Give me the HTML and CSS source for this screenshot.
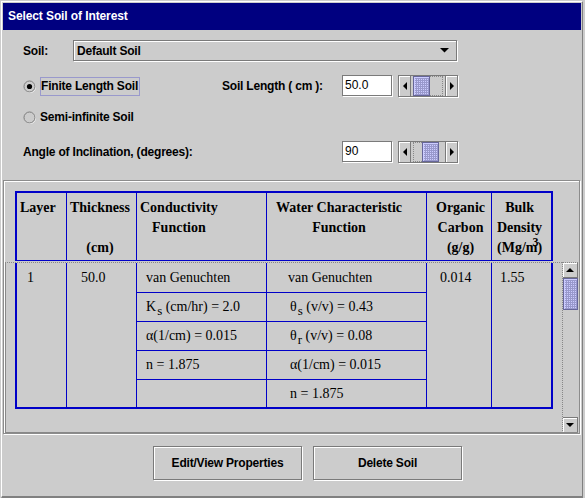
FILE: index.html
```html
<!DOCTYPE html>
<html>
<head>
<meta charset="utf-8">
<link rel="stylesheet" href="styles.css">
</head>
<body>
<div class="frame">
  <div class="title">Select Soil of Interest</div>
  <div class="controls">
    <div class="soil-row">
      <span class="lbl soil-lbl">Soil:</span>
      <div class="combo">
        <span class="combo-text">Default Soil</span>
        <svg class="combo-arrow" width="9" height="5" viewBox="0 0 9 5"><polygon points="0,0 9,0 4.5,4.5" fill="#000"/></svg>
      </div>
    </div>
    <div class="ctl-grid">
      <div class="radio-cell r1 c1">
        <svg class="radio" width="13" height="13" viewBox="0 0 13 13"><circle cx="7" cy="7" r="5.5" fill="none" stroke="#fff"/><circle cx="6.5" cy="6.5" r="5.5" fill="#ccc" stroke="#7a7a7a"/><circle cx="6.5" cy="6.5" r="2.6" fill="#000"/></svg>
        <span class="lbl focus">Finite Length Soil</span>
      </div>
      <div class="lbl r1 c2 vc">Soil Length ( cm ):</div>
      <div class="field r1 c3">50.0</div>
      <div class="hs r1 c5">
        <div class="hs-btn l"><svg width="4" height="8" viewBox="0 0 4 8"><polygon points="4,0 4,8 0,4" fill="#000"/></svg></div>
        <div class="hs-track">
          <div class="thumb-h"></div>
          <div class="dash-h w13"></div>
        </div>
        <div class="hs-btn r"><svg width="4" height="8" viewBox="0 0 4 8"><polygon points="0,0 0,8 4,4" fill="#000"/></svg></div>
      </div>

      <div class="radio-cell r3 c1">
        <svg class="radio" width="13" height="13" viewBox="0 0 13 13"><circle cx="7" cy="7" r="5.5" fill="none" stroke="#fff"/><circle cx="6.5" cy="6.5" r="5.5" fill="#ccc" stroke="#7a7a7a"/></svg>
        <span class="lbl rlabel">Semi-infinite Soil</span>
      </div>

      <div class="lbl r5 c12 vc">Angle of Inclination, (degrees):</div>
      <div class="field r5 c3">90</div>
      <div class="hs r5 c5">
        <div class="hs-btn l"><svg width="4" height="8" viewBox="0 0 4 8"><polygon points="4,0 4,8 0,4" fill="#000"/></svg></div>
        <div class="hs-track">
          <div class="dash-h w9"></div>
          <div class="thumb-h"></div>
        </div>
        <div class="hs-btn r"><svg width="4" height="8" viewBox="0 0 4 8"><polygon points="0,0 0,8 4,4" fill="#000"/></svg></div>
      </div>
    </div>
  </div>

  <div class="tablebox">
    <div class="thead-wrap">
      <div class="thead">
        <div class="th p3"><div class="stack"><div>Layer</div></div></div>
        <div class="th p3"><div class="stack"><div>Thickness</div><div>&nbsp;</div><div>(cm)</div></div></div>
        <div class="th p3"><div class="stack"><div>Conductivity</div><div>Function</div></div></div>
        <div class="th p9"><div class="stack"><div>Water Characteristic</div><div>Function</div></div></div>
        <div class="th p9"><div class="stack"><div>Organic</div><div>Carbon</div><div>(g/g)</div></div></div>
        <div class="th p5"><div class="stack"><div>Bulk</div><div>Density</div><div>(Mg/m<sup class="cube">3</sup>)</div></div></div>
      </div>
    </div>
    <div class="sp">
      <div class="viewport">
        <div class="tbody">
          <div class="td span pl10">1</div>
          <div class="td span pl14">50.0</div>
          <div class="td sub cond row1"><span>van Genuchten</span></div>
          <div class="td sub wat1 row1"><span>van Genuchten</span></div>
          <div class="td span org pl13">0.014</div>
          <div class="td span bulk pl8">1.55</div>

          <div class="td sub cond row2"><span>K<sub class="sb">s</sub> (cm/hr) = 2.0</span></div>
          <div class="td sub wat row2"><span>&theta;<sub class="sb">s</sub> (v/v) = 0.43</span></div>

          <div class="td sub cond row3"><span>&alpha;(1/cm) = 0.015</span></div>
          <div class="td sub wat row3"><span>&theta;<sub class="sb">r</sub> (v/v) = 0.08</span></div>

          <div class="td sub cond row4"><span>n = 1.875</span></div>
          <div class="td sub wat row4"><span>&alpha;(1/cm) = 0.015</span></div>

          <div class="td sub cond row5"></div>
          <div class="td sub wat row5"><span>n = 1.875</span></div>
        </div>
      </div>
      <div class="vs">
        <div class="vs-btn up"><svg width="8" height="4" viewBox="0 0 8 4"><polygon points="0,4 8,4 4,0" fill="#000"/></svg></div>
        <div class="thumb-v"></div>
        <div class="vs-btn down"><svg width="8" height="4" viewBox="0 0 8 4"><polygon points="0,0 8,0 4,4" fill="#000"/></svg></div>
      </div>
    </div>
  </div>

  <div class="buttons">
    <button class="btn">Edit/View Properties</button>
    <button class="btn">Delete Soil</button>
  </div>
</div>
</body>
</html>
```
FILE: styles.css
```css
* { box-sizing: border-box; }
html, body { margin: 0; padding: 0; background: #cccccc; }
body { font-family: "Liberation Sans", Arial, sans-serif; font-size: 12px; color: #000; }

.frame {
  margin: 1px 0 0 1px;
  width: 582px;
  height: 497px;
  border-style: solid;
  border-width: 1px 1px 2px 1px;
  border-color: #ffffff #808080 #808080 #ffffff;
  padding: 1px 1px 0 1px;
  background: #cccccc;
  display: flex;
  flex-direction: column;
}

.title {
  flex: none;
  height: 27px;
  background: #000080;
  color: #fff;
  font-weight: bold;
  line-height: 27px;
  padding-left: 5px;
  letter-spacing: -0.1px;
}

.controls { flex: none; height: 150px; padding: 10px 0 0 20px; }
.lbl { font-weight: bold; letter-spacing: -0.2px; }
.vc { display: flex; align-items: center; }

.soil-row { display: flex; align-items: center; height: 22px; }
.soil-lbl { width: 50px; }
.combo {
  width: 384px;
  height: 21px;
  align-self: flex-start;
  border: 1px solid #7a7a7a;
  box-shadow: inset 1px 1px 0 #fff, 1px 1px 0 #fff;
  display: flex;
  align-items: center;
  justify-content: space-between;
  padding: 0 7px 0 3px;
}
.combo-text { font-weight: bold; letter-spacing: -0.2px; }
.combo-arrow { display: block; margin-top: -1px; }

.ctl-grid {
  margin-top: 13px;
  display: grid;
  grid-template-columns: 199px 120px 51px 5px 60px;
  grid-template-rows: 22px 9px 22px 13px 22px;
}
.r1 { grid-row: 1; }
.r3 { grid-row: 3; }
.r5 { grid-row: 5; }
.c1 { grid-column: 1; }
.c2 { grid-column: 2; }
.c3 { grid-column: 3; }
.c5 { grid-column: 5; }
.c12 { grid-column: 1 / 3; }

.radio-cell { display: flex; align-items: center; }
.radio { display: block; flex: none; }
.focus {
  margin-left: 4px;
  border: 1px solid #9999cc;
  height: 19px;
  line-height: 17px;
  padding-right: 1px;
}
.rlabel { margin-left: 4px; }

.field {
  width: 50px;
  height: 21px;
  border: 1px solid #7a7a7a;
  box-shadow: 1px 1px 0 #fff;
  background: #fff;
  padding-left: 2px;
  line-height: 19px;
}

.hs {
  width: 60px;
  height: 22px;
  border: 1px solid #7a7a7a;
  box-shadow: 1px 1px 0 #fff;
  display: flex;
  background: #cccccc;
}
.hs-btn {
  flex: none;
  width: 12px;
  display: flex;
  align-items: center;
  justify-content: center;
  box-shadow: inset 1px 1px 0 #fff;
}
.hs-btn svg { display: block; }
.hs-btn.l { border-right: 1px solid #7a7a7a; }
.hs-btn.r { border-left: 1px solid #7a7a7a; }
.hs-track { flex: 1; display: flex; padding-left: 2px; }
.thumb-h, .thumb-v {
  border: 1px solid #666699;
  background-color: #9999cc;
  background-image: repeating-conic-gradient(#ccccff 0 25%, transparent 0 100%);
  background-size: 2px 2px;
  box-shadow: inset 1px 1px 0 #ccccff;
}
.thumb-h { width: 17px; height: 100%; flex: none; }
.dash-h { height: 100%; border: 1px dotted #888; border-left: none; flex: none; }
.dash-h.w9 { width: 9px; border-left: 1px dotted #888; border-right: none; }
.dash-h.w13 { width: 13px; }

.tablebox {
  flex: none;
  width: 577px;
  height: 254px;
  border: 1px solid #8c8c8c;
  box-shadow: inset 1px 1px 0 #fff, 1px 1px 0 #fff;
  display: flex;
  flex-direction: column;
}
.thead-wrap { flex: none; padding: 10px 0 1px 11px; }
.thead, .tbody {
  display: grid;
  grid-template-columns: 49px 69px 129px 159px 64px 59px;
  gap: 1px;
  background: #0000c8;
  width: 538px;
  font-family: "Liberation Serif", "Times New Roman", serif;
  font-size: 14px;
}
.thead { padding: 2px 2px 1px 2px; grid-template-rows: 67px; }
.th {
  background: #cccccc;
  padding-top: 5px;
  font-weight: bold;
  line-height: 20px;
}
.stack { display: inline-block; text-align: center; }
.p3 { padding-left: 3px; }
.p5 { padding-left: 5px; }
.p9 { padding-left: 9px; }
.cube { font-size: 12px; vertical-align: 6px; line-height: 0; margin-left: -5px; margin-right: -1px; }

.sp { flex: none; display: flex; height: 171px; margin: 0 1px; }
.viewport {
  flex: 1;
  border-top: 1px dotted #888;
  border-left: 1px solid #888;
  border-bottom: 1px solid #888;
  padding-left: 9px;
}
.tbody {
  padding: 0 2px 2px 2px;
  grid-template-rows: 29px 28px 28px 28px 27px;
}
.td { background: #cccccc; white-space: nowrap; }
.span { grid-row: 1 / 6; line-height: 29px; }
.sub { display: flex; align-items: center; }
.cond { grid-column: 3; padding-left: 9px; }
.wat1 { grid-column: 4; padding-left: 21px; }
.wat { grid-column: 4; padding-left: 23px; }
.org { grid-column: 5; }
.bulk { grid-column: 6; }
.row1 { grid-row: 1; }
.row2 { grid-row: 2; }
.row3 { grid-row: 3; }
.row4 { grid-row: 4; }
.row5 { grid-row: 5; }
.pl8 { padding-left: 8px; }
.pl10 { padding-left: 10px; }
.pl13 { padding-left: 13px; }
.pl14 { padding-left: 14px; }
.sb { font-size: 13px; vertical-align: -4px; line-height: 0; margin-left: 1px; }

.vs {
  flex: none;
  width: 16px;
  border-left: 1px dotted #888;
  border-top: 1px dotted #888;
  border-bottom: 1px solid #888;
  display: flex;
  flex-direction: column;
}
.vs-btn {
  flex: none;
  height: 15px;
  display: flex;
  align-items: center;
  justify-content: center;
  box-shadow: inset 1px 1px 0 #fff;
  border-right: 1px solid #7a7a7a;
}
.vs-btn svg { display: block; }
.vs-btn.up { border-bottom: 1px solid #7a7a7a; }
.vs-btn.down { margin-top: auto; border-top: 1px solid #7a7a7a; }
.thumb-v { height: 32px; flex: none; }

.buttons {
  flex: 1;
  display: flex;
  align-items: flex-start;
  gap: 11px;
  padding: 12px 0 0 150px;
}
.btn {
  width: 149px;
  height: 34px;
  margin: 0;
  padding: 0;
  border: 1px solid #7a7a7a;
  box-shadow: inset 1px 1px 0 #fff, 1px 1px 0 #fff;
  background: #cccccc;
  font-family: "Liberation Sans", Arial, sans-serif;
  font-size: 12px;
  font-weight: bold;
  letter-spacing: -0.2px;
  color: #000;
}
```
